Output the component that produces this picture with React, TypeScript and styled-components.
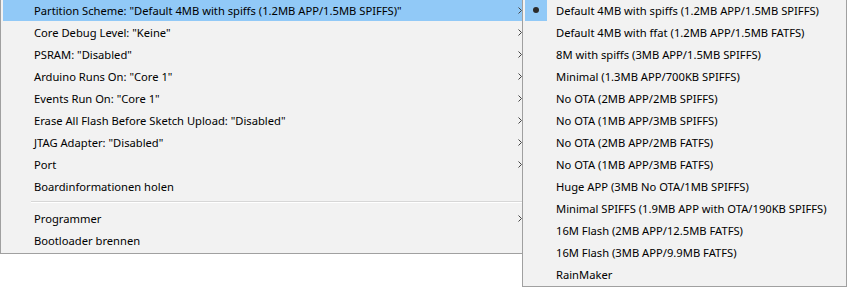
import styled, { createGlobalStyle } from "styled-components";

const GlobalStyle = createGlobalStyle`
  body {
    margin: 0;
    background: #ffffff;
    font-family: "Segoe UI", "Noto Sans", sans-serif;
    font-size: 11.2px;
    color: #000000;
  }
`;

const Screen = styled.div`
  position: relative;
  margin-top: -1px;
  width: 851px;
  height: 291px;
  overflow: hidden;
`;

const MainMenu = styled.div`
  width: 531px;
  box-sizing: border-box;
  background: #f2f2f2;
  border: 1px solid #a0a0a0;
  border-top: none;
  padding: 0 2px 2px 2px;
`;

const SubMenu = styled.div`
  position: absolute;
  top: 0;
  left: 522px;
  width: 325px;
  box-sizing: border-box;
  background: #f2f2f2;
  border: 1px solid #a0a0a0;
  border-top: none;
  padding: 0 2px 1px 2px;
`;

const Row = styled.div<{ $active?: boolean }>`
  display: flex;
  align-items: center;
  height: 22px;
  padding: 0 6px 0 31px;
  background: ${(p) => (p.$active ? "#91c9f7" : "transparent")};
  white-space: nowrap;
`;

const Label = styled.span`
  flex: 1;
`;

const Arrow = styled.svg`
  width: 4px;
  height: 7px;
  flex: none;
`;

const Separator = styled.div`
  height: 10px;
  margin-left: 28px;
  display: flex;
  align-items: center;

  &::before {
    content: "";
    display: block;
    width: 100%;
    height: 1px;
    background: #d7d7d7;
    border-bottom: 1px solid #ffffff;
  }
`;

const SubRow = styled.div`
  display: flex;
  align-items: center;
  height: 22px;
  white-space: nowrap;
`;

const CheckCell = styled.div<{ $checked?: boolean }>`
  width: 22px;
  height: 22px;
  flex: none;
  display: flex;
  align-items: center;
  justify-content: center;
  background: ${(p) => (p.$checked ? "#91c9f7" : "transparent")};
  margin-right: 9px;
`;

const Dot = styled.span`
  width: 6px;
  height: 6px;
  border-radius: 50%;
  background: #2b2b2b;
`;

const mainItems: { label: string; sub?: boolean; active?: boolean }[] = [
  { label: 'Partition Scheme: "Default 4MB with spiffs (1.2MB APP/1.5MB SPIFFS)"', sub: true, active: true },
  { label: 'Core Debug Level: "Keine"', sub: true },
  { label: 'PSRAM: "Disabled"', sub: true },
  { label: 'Arduino Runs On: "Core 1"', sub: true },
  { label: 'Events Run On: "Core 1"', sub: true },
  { label: 'Erase All Flash Before Sketch Upload: "Disabled"', sub: true },
  { label: 'JTAG Adapter: "Disabled"', sub: true },
  { label: "Port", sub: true },
  { label: "Boardinformationen holen" },
];

const toolItems = [
  { label: "Programmer", sub: true },
  { label: "Bootloader brennen" },
];

const schemes = [
  "Default 4MB with spiffs (1.2MB APP/1.5MB SPIFFS)",
  "Default 4MB with ffat (1.2MB APP/1.5MB FATFS)",
  "8M with spiffs (3MB APP/1.5MB SPIFFS)",
  "Minimal (1.3MB APP/700KB SPIFFS)",
  "No OTA (2MB APP/2MB SPIFFS)",
  "No OTA (1MB APP/3MB SPIFFS)",
  "No OTA (2MB APP/2MB FATFS)",
  "No OTA (1MB APP/3MB FATFS)",
  "Huge APP (3MB No OTA/1MB SPIFFS)",
  "Minimal SPIFFS (1.9MB APP with OTA/190KB SPIFFS)",
  "16M Flash (2MB APP/12.5MB FATFS)",
  "16M Flash (3MB APP/9.9MB FATFS)",
  "RainMaker",
];

const SubArrow = () => (
  <Arrow viewBox="0 0 4 7">
    <path d="M0.5 0.5 L3.5 3.5 L0.5 6.5" fill="none" stroke="#444" strokeWidth="1" />
  </Arrow>
);

const MenuRow = ({ label, sub, active }: { label: string; sub?: boolean; active?: boolean }) => (
  <Row $active={active}>
    <Label>{label}</Label>
    {sub && <SubArrow />}
  </Row>
);

export default function App() {
  return (
    <>
      <GlobalStyle />
      <Screen>
        <MainMenu>
          {mainItems.map((item) => (
            <MenuRow key={item.label} {...item} />
          ))}
          <Separator />
          {toolItems.map((item) => (
            <MenuRow key={item.label} {...item} />
          ))}
        </MainMenu>
        <SubMenu>
          {schemes.map((s, i) => (
            <SubRow key={s}>
              <CheckCell $checked={i === 0}>{i === 0 && <Dot />}</CheckCell>
              <span>{s}</span>
            </SubRow>
          ))}
        </SubMenu>
      </Screen>
    </>
  );
}
